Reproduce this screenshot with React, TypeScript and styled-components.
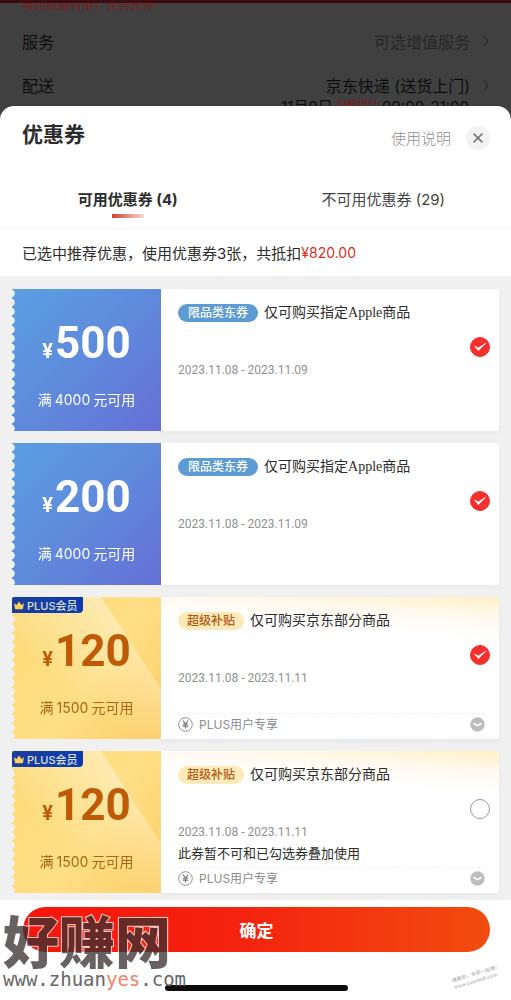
import React from 'react';
import styled, { createGlobalStyle, css } from 'styled-components';

const sans = `Inter, "Noto Sans CJK SC", sans-serif`;

const GlobalStyle = createGlobalStyle`
  * { box-sizing: border-box; }
  body { margin: 0; background: #fff; font-family: ${sans}; color: #2c2c2c; }
  button { border: 0; padding: 0; background: none; font: inherit; color: inherit; cursor: pointer; }
  h1, h2, p { margin: 0; font-weight: 400; }
`;

const Page = styled.div`
  display: flex;
  flex-direction: column;
  min-height: 100vh;
`;

/* Dimmed order page behind the sheet */
const Backdrop = styled.div`
  height: 120px;
  overflow: hidden;
  background: #404040;
  border-top: 3px solid #3e0b13;
  padding: 0 22px;
  color: #0c0c0c;
  font-size: 16px;
`;

const GiftNote = styled.p`
  margin-top: -6px;
  font-size: 12px;
  line-height: 16px;
  color: #7a1c1c;
`;

const OrderRow = styled.div`
  display: flex;
  align-items: center;
  height: 24px;
  margin-top: 20px;

  &:first-of-type { margin-top: 16px; }
`;

const OrderValue = styled.span<{ $muted?: boolean }>`
  margin-left: auto;
  margin-right: 13px;
  color: ${p => (p.$muted ? '#262626' : '#0c0c0c')};
`;

const DeliveryTime = styled.p`
  padding-right: 20px;
  line-height: 20px;
  font-size: 15px;
  text-align: right;

  em { font-style: normal; color: #7a1c1c; }
`;

const Sheet = styled.main`
  display: flex;
  flex-direction: column;
  flex: 1;
  margin-top: -14px;
  border-radius: 14px 14px 0 0;
  background: #fff;
`;

const Header = styled.header`
  display: flex;
  align-items: center;
  height: 64px;
  padding: 0 21px 0 22px;
`;

const Title = styled.h1`
  flex: 1;
  padding-bottom: 6px;
  font-size: 21px;
  line-height: 28px;
  font-weight: 700;
`;

const HelpLink = styled.a`
  margin-right: 15px;
  padding-bottom: 2px;
  font-size: 15px;
  font-weight: 300;
  color: #8f8f8f;
  text-decoration: none;
`;

const CloseButton = styled.button`
  display: grid;
  place-items: center;
  width: 24px;
  height: 24px;
  border-radius: 50%;
  background: #f2f2f2;
`;

const Tabs = styled.div`
  display: flex;
  height: 59px;
  border-bottom: 1px solid #f6f6f6;
`;

const Tab = styled.button<{ $active?: boolean }>`
  flex: 1;
  display: flex;
  flex-direction: column;
  align-items: center;
  padding-top: 18px;
  font-size: 15px;
  line-height: 24px;
  color: #444;

  ${p => p.$active && css`
    font-weight: 700;
    color: #2c2c2c;
    &::after {
      content: '';
      width: 32px;
      height: 4px;
      margin-top: 2px;
      background: linear-gradient(90deg, #d6402c, #f9d9d8);
    }
  `}
`;

const Summary = styled.p`
  display: flex;
  align-items: center;
  height: 47px;
  padding: 0 22px;
  font-size: 15px;
  white-space: pre;

  b { font-weight: 400; font-size: 14px; color: #d8301f; }
`;

const List = styled.section`
  display: flex;
  flex-direction: column;
  gap: 12px;
  padding: 13px 12px 7px;
  background: #f0f0f0;
`;

const Card = styled.article`
  position: relative;
  display: flex;
  min-height: 142px;
`;

const Face = styled.div<{ $gold?: boolean }>`
  position: relative;
  flex: 0 0 149px;
  display: flex;
  flex-direction: column;
  align-items: center;
  padding-top: 28px;
  color: ${p => (p.$gold ? '#bf5a06' : '#fff')};
  background: ${p => p.$gold
    ? 'linear-gradient(125deg, #fcda75 0%, #fedf86 55%, #fdcd64 100%)'
    : 'linear-gradient(135deg, #5a9fe2 0%, #5f8adc 50%, #666fd6 100%)'};
  mask: radial-gradient(ellipse 3px 4px at 0 50%, transparent 80%, #000 100%) 0 0 / 100% 9px;
`;

const Shine = styled.svg`
  position: absolute;
  inset: 0;
  width: 100%;
  height: 100%;
`;

const Amount = styled.p`
  position: relative;
  display: flex;
  align-items: baseline;
  gap: 2px;
  font-family: Roboto, sans-serif;
  font-weight: 700;
  font-size: 44px;
  line-height: 52px;

  small { font-size: 20px; }
`;

const Condition = styled.p<{ $gold?: boolean }>`
  position: relative;
  margin-top: 13px;
  font-size: 14px;
  line-height: 20px;
  color: ${p => (p.$gold ? '#a8661a' : '#fff')};

  span { margin: 0 3px; }
`;

const PlusBadge = styled.span`
  position: absolute;
  top: 0;
  left: 0;
  display: flex;
  align-items: center;
  gap: 3px;
  height: 16px;
  padding: 0 5px 0 2px;
  border-radius: 2px 0 4px 0;
  background: linear-gradient(90deg, #1c3f9a, #0b3ab4);
  color: #dfe0d2;
  font-size: 11px;
  font-weight: 500;
`;

const Detail = styled.div<{ $gold?: boolean }>`
  flex: 1;
  min-width: 0;
  display: flex;
  flex-direction: column;
  padding-left: 17px;
  border-radius: 0 2px 2px 0;
  box-shadow: 0 2px 5px rgba(0, 0, 0, 0.04);
  background: ${p => (p.$gold ? 'linear-gradient(184deg, #fff0c6 0, #fffaf0 22px, #fff 44px)' : '#fff')};
`;

const Body = styled.div`
  display: flex;
  align-items: center;
  justify-content: space-between;
  height: 116px;
  padding-right: 9px;
`;

const Info = styled.div`
  align-self: flex-start;
  padding-top: 14px;
`;

const Heading = styled.div`
  display: flex;
  align-items: center;
  gap: 6px;
  height: 20px;
`;

const Tag = styled.span<{ $gold?: boolean }>`
  padding: 0 ${p => (p.$gold ? 9 : 10)}px;
  border-radius: 9px;
  font-size: 12px;
  line-height: 18px;
  font-weight: 500;
  color: ${p => (p.$gold ? '#b25a12' : '#fff')};
  background: ${p => (p.$gold ? '#feeab8' : '#5c9bd3')};
`;

const Name = styled.h2`
  font-family: "Liberation Serif", "Noto Sans CJK SC", serif;
  font-size: 14px;
  line-height: 20px;
`;

const Dates = styled.p`
  margin-top: 37px;
  font-family: Roboto, sans-serif;
  font-size: 12px;
  line-height: 20px;
  color: #909090;
`;

const Conflict = styled.p`
  margin-top: 1px;
  font-size: 13px;
  line-height: 20px;
`;

const Pick = styled.label`
  display: grid;
  width: 20px;
  height: 20px;

  > * { grid-area: 1 / 1; }
  svg { pointer-events: none; visibility: hidden; }
  input:checked + svg { visibility: visible; }
`;

const PickInput = styled.input`
  appearance: none;
  width: 20px;
  height: 20px;
  margin: 0;
  border: 1px solid #999;
  border-radius: 50%;
  background: #fff;

  &:checked { border-color: #f5302f; background: #f5302f; }
`;

const Perk = styled.div`
  display: flex;
  align-items: center;
  flex: 1;
  gap: 6px;
  margin-right: 14px;
  padding-bottom: 4px;
  border-top: 1px dashed #f0f0f0;
  font-size: 12px;
  line-height: 16px;
  color: #8c8c8c;

  button { display: flex; margin-left: auto; }
`;

const Footer = styled.footer`
  position: relative;
  display: flex;
  flex-direction: column;
  align-items: center;
  padding: 7px 21px 9px 23px;
`;

const Confirm = styled.button`
  width: 100%;
  height: 45px;
  border-radius: 23px;
  background: linear-gradient(90deg, #f8160c 0%, #f4220f 45%, #f24c0e 100%);
  color: #fff;
  font-size: 17px;
  font-weight: 700;
`;

const HomeBar = styled.div`
  width: 183px;
  height: 6px;
  margin-top: 33px;
  border-radius: 3px;
  background: #0d0d0d;
`;

const SiteMark = styled.div`
  position: absolute;
  left: 3px;
  bottom: 9px;
  pointer-events: none;
`;

const SiteName = styled.p`
  font-family: "Noto Sans CJK SC", sans-serif;
  font-size: 56px;
  line-height: 56px;
  font-weight: 900;
  color: #3a3030;
  -webkit-text-stroke: 2px #fff;
  paint-order: stroke fill;
  opacity: 0.76;
`;

const SiteUrl = styled.p`
  font-family: "DejaVu Sans Mono", monospace;
  font-size: 19px;
  line-height: 24px;
  color: #666;

  em { font-style: normal; color: #f3826c; }
`;

const CornerMark = styled.div`
  position: absolute;
  right: 9px;
  bottom: 16px;
  transform: rotate(-17deg);
  font-size: 5px;
  line-height: 7px;
  color: #a8a8a8;
  pointer-events: none;
`;

const Chevron = () => (
  <svg width="6" height="12" viewBox="0 0 6 12" fill="none" stroke="#222" strokeWidth="1">
    <path d="M1 1l4 5-4 5" />
  </svg>
);

const Crown = () => (
  <svg width="10" height="9" viewBox="0 0 10 9" fill="#ffd25e">
    <path d="M0 2.2L2.6 4 5 .5 7.4 4 10 2.2 8.8 8.2H1.2z" />
  </svg>
);

const YuanIcon = () => (
  <svg width="15" height="15" viewBox="0 0 15 15" fill="none" stroke="#777">
    <circle cx="7.5" cy="7.5" r="6.8" strokeWidth=".8" />
    <path d="M5 3.7l2.5 3.4L10 3.7M4.8 7.2h5.4M4.8 9.1h5.4M7.5 7v4.5" strokeWidth="1.1" />
  </svg>
);

const MoreIcon = () => (
  <svg width="15" height="15" viewBox="0 0 15 15" fill="none">
    <circle cx="7.5" cy="7.5" r="7.2" fill="#bdbdbd" />
    <path d="M3.4 6.3l4.1 2.3 4.1-2.3" stroke="#fff" strokeWidth="1.6" />
  </svg>
);

type Coupon = {
  amount: number;
  min: number;
  gold?: boolean;
  tag: string;
  name: string;
  dates: string;
  checked?: boolean;
  conflict?: string;
};

const coupons: Coupon[] = [
  { amount: 500, min: 4000, tag: '限品类东券', name: '仅可购买指定Apple商品', dates: '2023.11.08 - 2023.11.09', checked: true },
  { amount: 200, min: 4000, tag: '限品类东券', name: '仅可购买指定Apple商品', dates: '2023.11.08 - 2023.11.09', checked: true },
  { amount: 120, min: 1500, gold: true, tag: '超级补贴', name: '仅可购买京东部分商品', dates: '2023.11.08 - 2023.11.11', checked: true },
  { amount: 120, min: 1500, gold: true, tag: '超级补贴', name: '仅可购买京东部分商品', dates: '2023.11.08 - 2023.11.11', conflict: '此券暂不可和已勾选券叠加使用' },
];

const CouponCard = ({ coupon: c, id }: { coupon: Coupon; id: string }) => (
  <Card>
    <Face $gold={c.gold}>
      {c.gold && (
        <Shine viewBox="0 0 149 142" preserveAspectRatio="none">
          <defs>
            <linearGradient id={`${id}-shine`} gradientUnits="userSpaceOnUse" x1="62" y1="98" x2="118" y2="28">
              <stop offset="0" stopColor="#fff" stopOpacity="0" />
              <stop offset="1" stopColor="#fff" stopOpacity=".38" />
            </linearGradient>
          </defs>
          <path d="M0 0H89L149 92V142H0z" fill={`url(#${id}-shine)`} />
        </Shine>
      )}
      <Amount><small>¥</small>{c.amount}</Amount>
      <Condition $gold={c.gold}>满<span>{c.min}</span>元可用</Condition>
    </Face>
    {c.gold && <PlusBadge><Crown />PLUS会员</PlusBadge>}
    <Detail $gold={c.gold}>
      <Body>
        <Info>
          <Heading>
            <Tag $gold={c.gold}>{c.tag}</Tag>
            <Name id={`${id}-name`}>{c.name}</Name>
          </Heading>
          <Dates>{c.dates}</Dates>
          {c.conflict && <Conflict>{c.conflict}</Conflict>}
        </Info>
        <Pick htmlFor={id}>
          <PickInput type="checkbox" id={id} aria-labelledby={`${id}-name`} defaultChecked={c.checked} />
          <svg width="20" height="20" viewBox="0 0 20 20" fill="none">
            <path d="M4.6 9.2l3.8 4.4 7.2-7.2-7.2 4.6z" fill="#fff" stroke="#fff" strokeWidth=".7" />
          </svg>
        </Pick>
      </Body>
      {c.gold && (
        <Perk>
          <YuanIcon />
          PLUS用户专享
          <button type="button" aria-label="展开"><MoreIcon /></button>
        </Perk>
      )}
    </Detail>
  </Card>
);

export default function App() {
  return (
    <Page>
      <GlobalStyle />
      <Backdrop>
        <GiftNote>赠品数量有限，先到先得</GiftNote>
        <OrderRow>服务<OrderValue $muted>可选增值服务</OrderValue><Chevron /></OrderRow>
        <OrderRow>配送<OrderValue>京东快递 (送货上门)</OrderValue><Chevron /></OrderRow>
        <DeliveryTime>11月9日 <em>[周四]</em> 09:00-21:00</DeliveryTime>
      </Backdrop>
      <Sheet>
        <Header>
          <Title>优惠券</Title>
          <HelpLink href="#help">使用说明</HelpLink>
          <CloseButton type="button" aria-label="关闭">
            <svg width="10" height="10" viewBox="0 0 10 10" stroke="#777" strokeWidth="1.6">
              <path d="M.6.6l8.8 8.8M9.4.6L.6 9.4" />
            </svg>
          </CloseButton>
        </Header>
        <Tabs>
          <Tab type="button" $active>可用优惠券 (4)</Tab>
          <Tab type="button">不可用优惠券 (29)</Tab>
        </Tabs>
        <Summary>已选中推荐优惠，使用优惠券3张，共抵扣<b>¥820.00</b></Summary>
        <List>
          {coupons.map((c, i) => <CouponCard key={i} coupon={c} id={`coupon-${i}`} />)}
        </List>
        <Footer>
          <Confirm type="button">确定</Confirm>
          <HomeBar />
          <SiteMark>
            <SiteName>好赚网</SiteName>
            <SiteUrl>www.zhuan<em>yes</em>.com</SiteUrl>
          </SiteMark>
          <CornerMark>
            <div>赚客吧，有奖一起赚！</div>
            <div>www.zuanke8.com</div>
          </CornerMark>
        </Footer>
      </Sheet>
    </Page>
  );
}
